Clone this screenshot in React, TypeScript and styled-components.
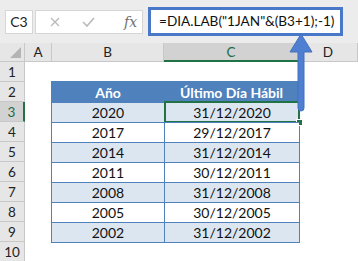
import styled, { createGlobalStyle } from 'styled-components';

const GlobalStyle = createGlobalStyle`
  html, body { margin: 0; padding: 0; background: #fff; overflow: hidden; }
  body { font-family: Lato, "Open Sans", sans-serif; }
`;

const Page = styled.div`
  position: relative;
  width: 358px;
  height: 261px;
  overflow: hidden;
  background: #fff;
`;

const FormulaBar = styled.div`
  height: 43px;
  background: #ececec;
  display: flex;
  align-items: center;
  padding-left: 5px;
  box-sizing: border-box;
`;

const NameBox = styled.div`
  width: 28px;
  height: 24px;
  box-sizing: border-box;
  background: #fff;
  border: 1px solid #d6d6d6;
  display: flex;
  align-items: center;
  justify-content: center;
  font-size: 14px;
  color: #222;
`;

const Tools = styled.div`
  margin-left: 2px;
  width: 108px;
  height: 24px;
  box-sizing: border-box;
  background: #fff;
  border: 1px solid #d6d6d6;
  display: flex;
  align-items: center;
  padding-left: 14px;
  gap: 22px;
`;

const Fx = styled.span`
  margin-left: 7px;
  font-family: "DejaVu Serif", "Liberation Serif", serif;
  font-style: italic;
  font-size: 14px;
  color: #707070;
`;

const FormulaInput = styled.div`
  margin-left: 5px;
  margin-top: -1px;
  width: 195px;
  height: 29px;
  box-sizing: border-box;
  border: 3px solid #4a78c8;
  background: #fff;
  display: flex;
  align-items: center;
  padding-left: 8px;
  font-size: 13.6px;
  color: #111;
  white-space: nowrap;
`;

const Sheet = styled.div`
  display: grid;
  grid-template-columns: 25px 27px 112px 135px 1fr;
  grid-template-rows: 19px repeat(10, 20px);
`;

const Corner = styled.div`
  background: #e6e6e6;
  border-right: 1px solid #c8c8c8;
  border-bottom: 1px solid #c8c8c8;
  box-sizing: border-box;
  position: relative;
  &::after {
    content: '';
    position: absolute;
    right: 3px;
    bottom: 3px;
    border-style: solid;
    border-width: 0 0 11px 11px;
    border-color: transparent transparent #b4b4b4 transparent;
  }
`;

const ColHead = styled.div<{ $active?: boolean }>`
  background: ${p => (p.$active ? '#d2d2d2' : '#e6e6e6')};
  border-right: 1px solid #c8c8c8;
  border-bottom: ${p => (p.$active ? '2px solid #217346' : '1px solid #c8c8c8')};
  box-sizing: border-box;
  display: flex;
  align-items: center;
  justify-content: center;
  font-size: 13.5px;
  color: ${p => (p.$active ? '#1e6b45' : '#222')};
`;

const RowHead = styled.div<{ $active?: boolean }>`
  grid-column: 1;
  background: ${p => (p.$active ? '#d2d2d2' : '#e6e6e6')};
  border-right: ${p => (p.$active ? '2px solid #217346' : '1px solid #c8c8c8')};
  border-bottom: 1px solid #c8c8c8;
  box-sizing: border-box;
  display: flex;
  align-items: center;
  justify-content: center;
  font-size: 13.5px;
  color: ${p => (p.$active ? '#1e6b45' : '#222')};
`;

const Table = styled.div`
  grid-column: 3 / 5;
  grid-row: 3 / 11;
  display: grid;
  grid-template-columns: 112px 135px;
  grid-template-rows: repeat(8, 20px);
  box-shadow: 0 0 0 1px #4f81bd;
`;

const HeadCell = styled.div`
  background: #4f81bd;
  color: #fff;
  font-weight: bold;
  font-size: 14px;
  display: flex;
  align-items: center;
  justify-content: center;
`;

const Cell = styled.div<{ $band: boolean; $selected?: boolean; $first?: boolean }>`
  position: relative;
  background: ${p => (p.$band ? '#dce6f1' : '#fff')};
  border-top: 1px solid #4f81bd;
  border-left: ${p => (p.$first ? 'none' : '1px solid #4f81bd')};
  box-sizing: border-box;
  display: flex;
  align-items: center;
  justify-content: center;
  font-size: 14px;
  color: #111;
  ${p =>
    p.$selected &&
    `
    &::before {
      content: '';
      position: absolute;
      left: -1px; right: -1px; top: -2px; bottom: -1px;
      border: 2px solid #217346;
    }
    &::after {
      content: '';
      position: absolute;
      right: -4px; bottom: -4px;
      width: 5px; height: 5px;
      background: #217346;
      border: 1px solid #fff;
    }
  `}
`;

const Arrow = styled.svg`
  position: absolute;
  left: 288px;
  top: 33px;
`;

const rows = [
  ['2020', '31/12/2020'],
  ['2017', '29/12/2017'],
  ['2014', '31/12/2014'],
  ['2011', '30/12/2011'],
  ['2008', '31/12/2008'],
  ['2005', '30/12/2005'],
  ['2002', '31/12/2002'],
];

const App = () => (
  <Page>
    <GlobalStyle />
    <FormulaBar>
      <NameBox>C3</NameBox>
      <Tools>
        <svg width="10" height="10" viewBox="0 0 10 10">
          <path d="M1 1 L9 9 M9 1 L1 9" stroke="#b9b9b9" strokeWidth="1.3" />
        </svg>
        <svg width="13" height="10" viewBox="0 0 13 10">
          <path d="M1 5 L5 9 L12 1" stroke="#b9b9b9" strokeWidth="1.6" fill="none" />
        </svg>
        <Fx>fx</Fx>
      </Tools>
      <FormulaInput>=DIA.LAB("1JAN"&amp;(B3+1);-1)</FormulaInput>
    </FormulaBar>
    <Sheet>
      <Corner />
      <ColHead>A</ColHead>
      <ColHead>B</ColHead>
      <ColHead $active>C</ColHead>
      <ColHead>D</ColHead>
      {Array.from({ length: 10 }, (_, i) => (
        <RowHead key={i} $active={i === 2} style={{ gridRow: i + 2 }}>
          {i + 1}
        </RowHead>
      ))}
      <Table>
        <HeadCell>Año</HeadCell>
        <HeadCell>Último Día Hábil</HeadCell>
        {rows.map((r, i) => [
          <Cell key={'b' + i} $band={i % 2 === 0} $first>{r[0]}</Cell>,
          <Cell key={'c' + i} $band={i % 2 === 0} $selected={i === 0}>{r[1]}</Cell>,
        ])}
      </Table>
    </Sheet>
    <Arrow width="26" height="80" viewBox="0 0 26 80">
      <path
        d="M13 1 L24 19 L16 19 L16 75 Q16 78 13 78 Q10 78 10 75 L10 19 L2 19 Z"
        fill="#4f7fd0"
        stroke="#4470bd"
        strokeWidth="1"
      />
    </Arrow>
  </Page>
);

export default App;
